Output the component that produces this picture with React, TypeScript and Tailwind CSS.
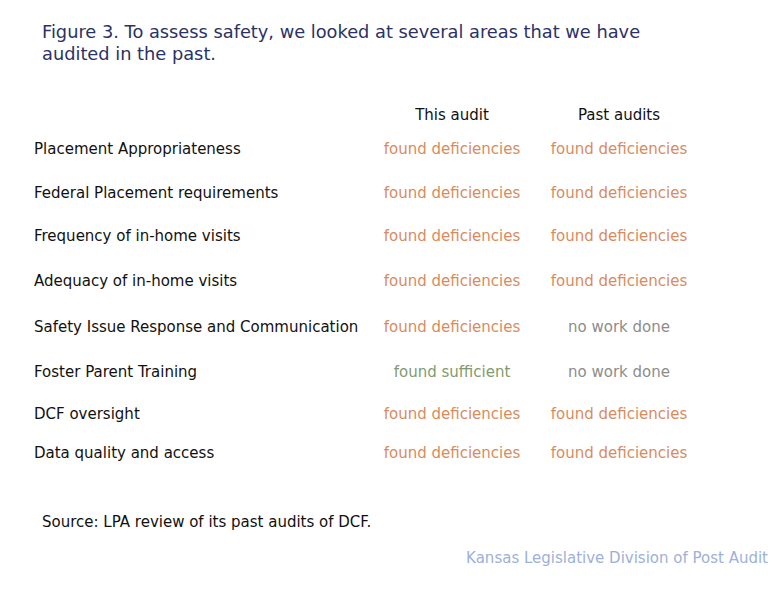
const rows = [
  { label: 'Placement Appropriateness', a: 'def', b: 'def', h: 'h-[44px]' },
  { label: 'Federal Placement requirements', a: 'def', b: 'def', h: 'h-[43px]' },
  { label: 'Frequency of in-home visits', a: 'def', b: 'def', h: 'h-[45px]' },
  { label: 'Adequacy of in-home visits', a: 'def', b: 'def', h: 'h-[46px]' },
  { label: 'Safety Issue Response and Communication', a: 'def', b: 'none', h: 'h-[45px]' },
  { label: 'Foster Parent Training', a: 'ok', b: 'none', h: 'h-[42px]' },
  { label: 'DCF oversight', a: 'def', b: 'def', h: 'h-[39px]' },
  { label: 'Data quality and access', a: 'def', b: 'def', h: 'h-[39px]' },
];

function Status({ kind }: { kind: string }) {
  if (kind === 'def') return <span className="text-[#d98b5e]">found deficiencies</span>;
  if (kind === 'ok') return <span className="text-[#7f9b6e]">found sufficient</span>;
  return <span className="text-[#8c8c8c]">no work done</span>;
}

export default function App() {
  return (
    <div className="w-[783px] h-[594px] bg-white font-['DejaVu_Sans',sans-serif]">
      <div className="pl-[42px] pt-[21px] text-[17.8px] leading-[22px] text-[#2b3265]">
        Figure 3. To assess safety, we looked at several areas that we have
        <br />
        audited in the past.
      </div>

      <div className="mt-[33px] pl-[34px] text-[15px] text-[#111]">
        <div className="flex items-start h-[42px] pt-[8px] leading-[18px]">
          <div className="w-[336px]" />
          <div className="w-[164px] text-center">This audit</div>
          <div className="w-[170px] text-center">Past audits</div>
        </div>
        {rows.map((r) => (
          <div key={r.label} className={`flex items-start ${r.h} leading-[18px]`}>
            <div className="w-[336px] whitespace-nowrap">{r.label}</div>
            <div className="w-[164px] text-center"><Status kind={r.a} /></div>
            <div className="w-[170px] text-center"><Status kind={r.b} /></div>
          </div>
        ))}
      </div>

      <div className="pl-[42px] mt-[28px] text-[15px] text-[#111]">Source: LPA review of its past audits of DCF.</div>
      <div className="flex justify-end pr-[15px] mt-[13px] text-[15px] text-[#9db1d9]">Kansas Legislative Division of Post Audit</div>
    </div>
  );
}
